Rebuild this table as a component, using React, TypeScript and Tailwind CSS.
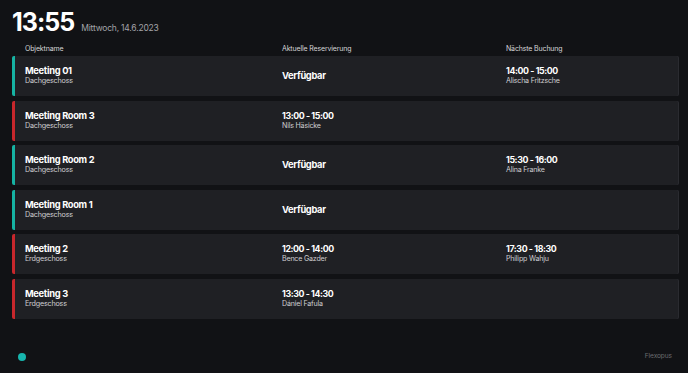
type Room = {
  name: string;
  floor: string;
  busy: boolean;
  current?: { time: string; who: string };
  next?: { time: string; who: string };
};

const rooms: Room[] = [
  { name: "Meeting 01", floor: "Dachgeschoss", busy: false, next: { time: "14:00 - 15:00", who: "Alischa Fritzsche" } },
  { name: "Meeting Room 3", floor: "Dachgeschoss", busy: true, current: { time: "13:00 - 15:00", who: "Nils Häsicke" } },
  { name: "Meeting Room 2", floor: "Dachgeschoss", busy: false, next: { time: "15:30 - 16:00", who: "Alina Franke" } },
  { name: "Meeting Room 1", floor: "Dachgeschoss", busy: false },
  {
    name: "Meeting 2",
    floor: "Erdgeschoss",
    busy: true,
    current: { time: "12:00 - 14:00", who: "Bence Gazder" },
    next: { time: "17:30 - 18:30", who: "Philipp Wahju" },
  },
  { name: "Meeting 3", floor: "Erdgeschoss", busy: true, current: { time: "13:30 - 14:30", who: "Dániel Fafula" } },
];

function Slot({ time, who }: { time: string; who: string }) {
  return (
    <div className="flex flex-col">
      <span className="text-[8.8px] font-bold leading-[10px] tracking-[-0.4px] text-white">{time}</span>
      <span className="text-[7.1px] leading-[10px] tracking-[-0.2px] text-[#cfcfd2]">{who}</span>
    </div>
  );
}

function RoomRow({ room }: { room: Room }) {
  return (
    <div
      className={
        "grid h-10 grid-cols-[257px_224px_1fr] items-center rounded-[2px] border-l-[3px] bg-[#1f2024] pl-[10px] shadow-[inset_-1px_0_0_#2a2b30] " +
        (room.busy ? "border-[#c7272c]" : "border-[#16b3a3]")
      }
    >
      <div className="flex flex-col">
        <span className="text-[9.3px] font-bold leading-[10px] tracking-[-0.3px] text-white">{room.name}</span>
        <span className="text-[7.2px] leading-[10px] tracking-[-0.2px] text-[#cfcfd2]">{room.floor}</span>
      </div>
      <div className="flex">
        {room.current ? (
          <Slot {...room.current} />
        ) : (
          <span className="text-[9.3px] font-bold leading-[10px] tracking-[-0.3px] text-white">Verfügbar</span>
        )}
      </div>
      <div>{room.next ? <Slot {...room.next} /> : null}</div>
    </div>
  );
}

export default function App() {
  return (
    <div className="flex h-[373px] w-[688px] flex-col bg-[#111215] px-3 font-['Inter','Noto_Sans',sans-serif] text-white">
      <div className="flex items-baseline gap-[7px] pt-[7px]">
        <span className="text-[25px] font-bold leading-[30px] tracking-[-1px]">13:55</span>
        <span className="text-[8.5px] tracking-[-0.2px] text-[#a3a4a8]">Mittwoch, 14.6.2023</span>
      </div>

      <div className="mt-[7px] grid grid-cols-[257px_224px_1fr] pl-[13px] text-[7px] leading-[10px] tracking-[-0.15px] text-[#d6d6d8]">
        <span>Objektname</span>
        <span>Aktuelle Reservierung</span>
        <span>Nächste Buchung</span>
      </div>

      <div className="mt-[2px] mr-[-3px] flex flex-col gap-[4.5px]">
        {rooms.map((room) => (
          <RoomRow key={room.name} room={room} />
        ))}
      </div>

      <div className="mt-auto flex items-center justify-between pb-[11px] pl-[6px] pr-[4px]">
        <span className="size-2 rounded-full bg-[#17b5ad]" />
        <span className="text-[6.6px] tracking-[-0.1px] text-[#6b6c70]">Flexopus</span>
      </div>
    </div>
  );
}
